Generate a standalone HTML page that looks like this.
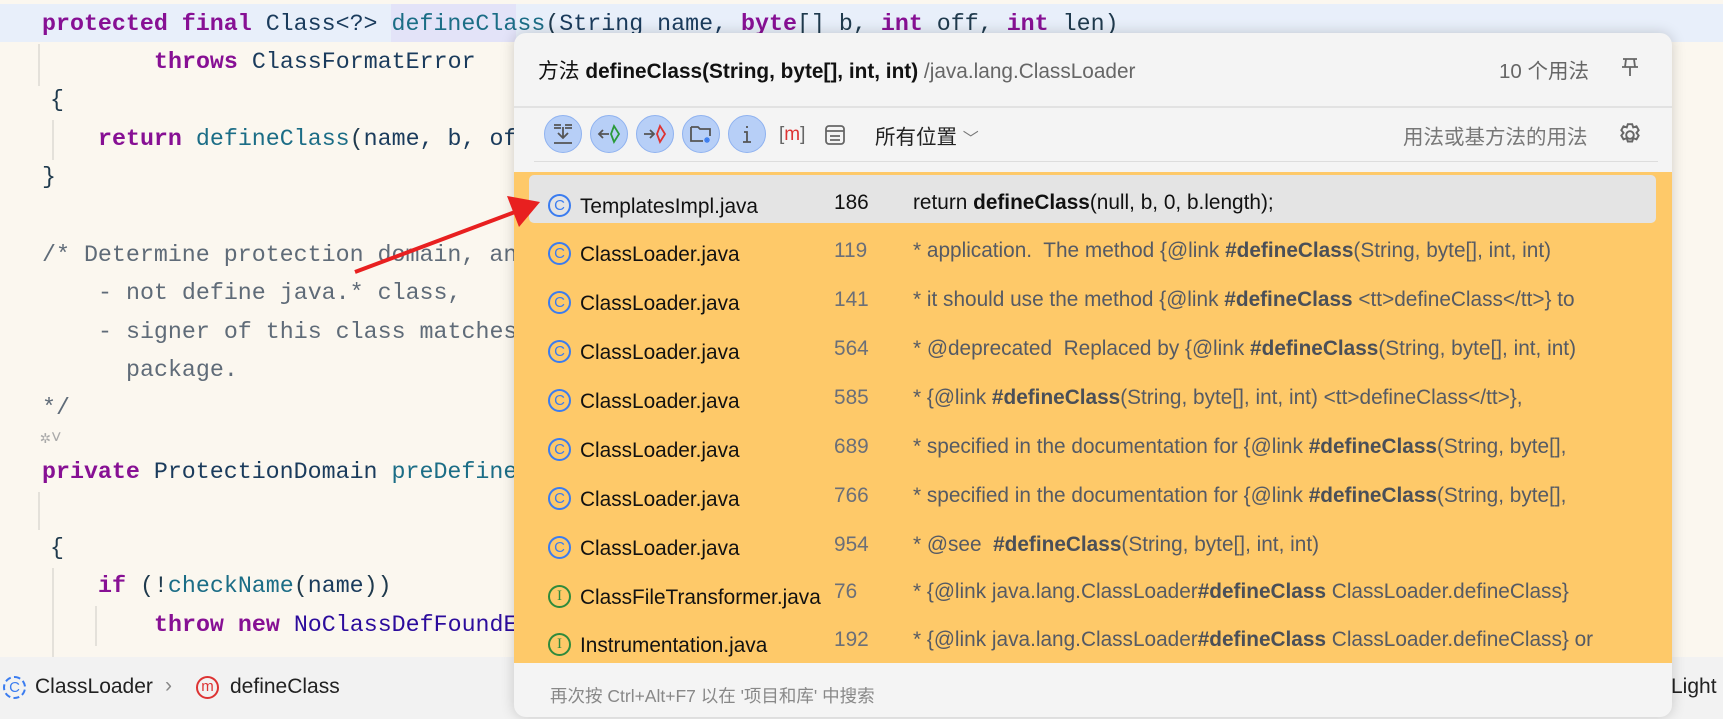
<!DOCTYPE html>
<html><head><meta charset="utf-8">
<style>
*{margin:0;padding:0;box-sizing:border-box}
body{width:1723px;height:719px;overflow:hidden;background:#fbf7ef;position:relative;font-family:"Liberation Sans","Noto Sans CJK SC",sans-serif}
.code{position:absolute;left:0;top:0;width:1723px;font-family:"Liberation Mono",monospace;font-size:23.3px;color:#1f3a4d}
.ln{position:absolute;white-space:pre;height:38px;line-height:38px}
.k{color:#871094;font-weight:bold}
.c{color:#5f6b78}
.f{color:#1b6d86}
.t{color:#1a3b5c}
.p{color:#2c0c9c}
.hl{position:absolute;left:0;top:4px;width:1723px;height:38px;background:#e8effa}
.hl2{position:absolute;left:391px;top:4px;width:125px;height:38px;background:#e3e3f8}
.guide{position:absolute;width:2px;background:#e4e1da}
.status{position:absolute;left:0;top:657px;width:1723px;height:62px;background:#f2f2f2;font-size:21px;color:#222}
.popup{position:absolute;left:514px;top:33px;width:1158px;height:684px;background:#f4f4f4;border-radius:12px;box-shadow:0 0 14px rgba(0,0,0,.18);overflow:hidden}
.tb{position:absolute;top:82px;width:38px;height:38px;border-radius:50%;background:#b7cff7;border:1.5px solid #8fb2f0}
.tb svg{position:absolute;left:6px;top:6px}
.row{position:absolute;left:0;width:1158px;height:49px;font-size:20.8px;line-height:49px;white-space:nowrap}
.row .ic{position:absolute;left:34px;top:16px;width:23px;height:23px;border-radius:50%;border:2px solid #3a7cf0;color:#3a7cf0;font-size:15px;line-height:19px;text-align:center}
.row .ii{border-color:#2f8a3c;color:#2f8a3c;font-family:"Liberation Serif",serif}
.row .fn{position:absolute;left:66px;top:4px;color:#111}
.row .n{position:absolute;left:320px;color:#6b6f78}
.row .tx{position:absolute;left:399px;color:#555a64}
.row .tx b{color:#4a4f58}
</style></head><body>
<div class="hl"></div><div class="hl2"></div>
<div class="guide" style="left:38px;top:44px;height:42px"></div>
<div class="guide" style="left:52px;top:120px;height:40px"></div>
<div class="guide" style="left:38px;top:492px;height:38px"></div>
<div class="guide" style="left:52px;top:568px;height:90px"></div>
<div class="guide" style="left:95px;top:606px;height:40px"></div>
<div class="code">
<div class="ln" style="top:5px;left:42px"><span class="k">protected final </span><span class="t">Class&lt;?&gt; </span><span class="f">defineClass</span>(<span class="t">String name, </span><span class="k">byte</span>[] b, <span class="k">int</span> off, <span class="k">int</span> len)</div>
<div class="ln" style="top:43px;left:154px"><span class="k">throws </span><span class="t">ClassFormatError</span></div>
<div class="ln" style="top:81px;left:50px">{</div>
<div class="ln" style="top:120px;left:98px"><span class="k">return </span><span class="f">defineClass</span>(<span class="t">name, b, of</span></div>
<div class="ln" style="top:158px;left:42px">}</div>
<div class="ln c" style="top:236px;left:42px">/* Determine protection domain, an</div>
<div class="ln c" style="top:274px;left:98px">- not define java.* class,</div>
<div class="ln c" style="top:313px;left:98px">- signer of this class matches</div>
<div class="ln c" style="top:351px;left:126px">package.</div>
<div class="ln c" style="top:389px;left:42px">*/</div>
<div class="ln" style="top:420px;left:40px;font-size:18px;color:#aaa">✲˅</div>
<div class="ln" style="top:453px;left:42px"><span class="k">private </span><span class="t">ProtectionDomain </span><span class="f">preDefine</span></div>
<div class="ln" style="top:529px;left:50px">{</div>
<div class="ln" style="top:567px;left:98px"><span class="k">if </span>(!<span class="f">checkName</span>(<span class="t">name</span>))</div>
<div class="ln" style="top:606px;left:154px"><span class="k">throw new </span><span class="p">NoClassDefFoundE</span></div>
</div>
<div class="status">
<div style="position:absolute;left:3px;top:19px;width:23px;height:23px;border-radius:50%;border:2px dashed #3a7cf0;color:#3a7cf0;font-size:15px;line-height:19px;text-align:center">C</div>
<div style="position:absolute;left:35px;top:18px">ClassLoader</div>
<div style="position:absolute;left:165px;top:17px;color:#888">›</div>
<div style="position:absolute;left:196px;top:19px;width:23px;height:23px;border-radius:50%;border:2px solid #d33;color:#d33;font-size:15px;line-height:18px;text-align:center">m</div>
<div style="position:absolute;left:230px;top:18px">defineClass</div>
<div style="position:absolute;left:1671px;top:18px">Light</div>
</div>
<div class="popup">
<div style="position:absolute;left:24px;top:21px;font-size:20.8px;color:#111">方法 <b>defineClass(String, byte[], int, int)</b> <span style="color:#666">/java.lang.ClassLoader</span></div>
<div style="position:absolute;left:985px;top:21px;font-size:20.5px;color:#666">10 个用法</div>
<svg style="position:absolute;left:1104px;top:22px" width="24" height="24" viewBox="0 0 24 24" fill="none" stroke="#666" stroke-width="1.8"><path d="M5 4h14M8 4l-1 8h10l-1-8M4 12h16M12 12v9"/></svg>
<div style="position:absolute;left:0;top:73px;width:1158px;height:2px;background:#e2e2e2"></div>
<div class="tb" style="left:30px"><svg width="24" height="24" viewBox="0 0 24 24" fill="none" stroke="#555" stroke-width="1.8"><path d="M3 3h7M14 3h7M3 6h7M14 6h7M12 5v10M7 11l5 5 5-5M3 21h18"/></svg></div>
<div class="tb" style="left:76px"><svg width="24" height="24" viewBox="0 0 24 24" fill="none" stroke-width="1.8"><path d="M2 12h10M6 8l-4 4 4 4" stroke="#555"/><path d="M17 4l5 8-5 8-3-8z" stroke="#2a9a3a"/></svg></div>
<div class="tb" style="left:122px"><svg width="24" height="24" viewBox="0 0 24 24" fill="none" stroke-width="1.8"><path d="M1 12h10M7 8l4 4-4 4" stroke="#555"/><path d="M17 4l5 8-5 8-3-8z" stroke="#d33"/></svg></div>
<div class="tb" style="left:168px"><svg width="24" height="24" viewBox="0 0 24 24" fill="none" stroke="#555" stroke-width="1.8"><path d="M2 5h7l2 2h10v7M2 5v14h12"/><path d="M18 15v6M15 18h6M16 16l4 4M20 16l-4 4" stroke="#3a7cf0" stroke-width="1.3"/></svg></div>
<div class="tb" style="left:214px"><svg width="24" height="24" viewBox="0 0 24 24" fill="none" stroke="#555" stroke-width="1.8"><path d="M12 4v2M9 10h3v10M8 20h8"/></svg></div>
<div style="position:absolute;left:265px;top:91px;font-size:19px;color:#666">[<span style="color:#d33">m</span>]</div>
<svg style="position:absolute;left:309px;top:90px" width="24" height="24" viewBox="0 0 24 24" fill="none" stroke="#666" stroke-width="1.8"><rect x="3" y="3" width="18" height="18" rx="3"/><path d="M3 8h18M7 13h10M7 17h10"/></svg>
<div style="position:absolute;left:361px;top:87px;font-size:20.5px;color:#222">所有位置 <span style="color:#777;font-size:16px">﹀</span></div>
<div style="position:absolute;left:889px;top:87px;font-size:20.5px;color:#777">用法或基方法的用法</div>
<svg style="position:absolute;left:1103px;top:89px" width="26" height="26" viewBox="0 0 24 24" fill="none" stroke="#666" stroke-width="1.8"><circle cx="12" cy="12" r="3.5"/><path d="M10 2h4l1 3 3-1 2 3.5-2 2.5 2 2.5-2 3.5-3-1-1 3h-4l-1-3-3 1-2-3.5 2-2.5-2-2.5 2-3.5 3 1z"/></svg>
<div style="position:absolute;left:20px;top:128px;width:1124px;height:1px;background:#ddd"></div>
<div style="position:absolute;left:0;top:139px;width:1158px;height:491px;background:#fec969"></div>
<div style="position:absolute;left:15px;top:142px;width:1127px;height:48px;background:#e4e4e4;border-radius:5px"></div>
<div class="row" style="top:145px"><div class="ic">C</div><div class="fn">TemplatesImpl.java</div><div class="n" style="color:#111">186</div><div class="tx" style="color:#111">return <b style="color:#111">defineClass</b>(null, b, 0, b.length);</div></div>
<div class="row" style="top:193px"><div class="ic">C</div><div class="fn">ClassLoader.java</div><div class="n">119</div><div class="tx">* application.&nbsp; The method {@link <b>#defineClass</b>(String, byte[], int, int)</div></div>
<div class="row" style="top:242px"><div class="ic">C</div><div class="fn">ClassLoader.java</div><div class="n">141</div><div class="tx">* it should use the method {@link <b>#defineClass</b> &lt;tt&gt;defineClass&lt;/tt&gt;} to</div></div>
<div class="row" style="top:291px"><div class="ic">C</div><div class="fn">ClassLoader.java</div><div class="n">564</div><div class="tx">* @deprecated&nbsp; Replaced by {@link <b>#defineClass</b>(String, byte[], int, int)</div></div>
<div class="row" style="top:340px"><div class="ic">C</div><div class="fn">ClassLoader.java</div><div class="n">585</div><div class="tx">* {@link <b>#defineClass</b>(String, byte[], int, int) &lt;tt&gt;defineClass&lt;/tt&gt;},</div></div>
<div class="row" style="top:389px"><div class="ic">C</div><div class="fn">ClassLoader.java</div><div class="n">689</div><div class="tx">* specified in the documentation for {@link <b>#defineClass</b>(String, byte[],</div></div>
<div class="row" style="top:438px"><div class="ic">C</div><div class="fn">ClassLoader.java</div><div class="n">766</div><div class="tx">* specified in the documentation for {@link <b>#defineClass</b>(String, byte[],</div></div>
<div class="row" style="top:487px"><div class="ic">C</div><div class="fn">ClassLoader.java</div><div class="n">954</div><div class="tx">* @see&nbsp; <b>#defineClass</b>(String, byte[], int, int)</div></div>
<div class="row" style="top:536px"><div class="ic ii">I</div><div class="fn">ClassFileTransformer.java</div><div class="n" style="top:-2px">76</div><div class="tx" style="top:-2px">* {@link java.lang.ClassLoader<b>#defineClass</b> ClassLoader.defineClass}</div></div>
<div class="row" style="top:584px"><div class="ic ii">I</div><div class="fn">Instrumentation.java</div><div class="n" style="top:-2px">192</div><div class="tx" style="top:-2px">* {@link java.lang.ClassLoader<b>#defineClass</b> ClassLoader.defineClass} or</div></div>
<div style="position:absolute;left:36px;top:650px;font-size:17.5px;color:#888">再次按 Ctrl+Alt+F7 以在 '项目和库' 中搜索</div>
</div>
<svg style="position:absolute;left:0;top:0" width="1723" height="719"><line x1="355" y1="272" x2="515" y2="212" stroke="#e82020" stroke-width="4"/><polygon points="540,202 507,196 519,227" fill="#e82020"/></svg>
</body></html>
